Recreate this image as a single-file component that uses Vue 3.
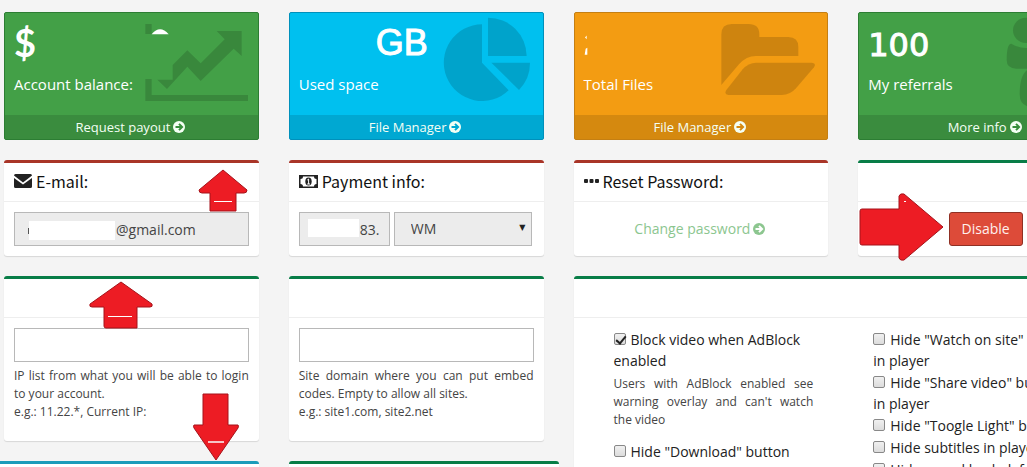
<script setup>
import { ref } from 'vue'

const email = ref('@gmail.com')
const wallet = ref('83.')
const method = ref('WM')
const ips = ref('')
const domains = ref('')

const stats = ref([
  { kind: 'chart', tone: 'green', value: '$', label: 'Account balance:', link: 'Request payout', box: '416 36 330 300' },
  { kind: 'pie', tone: 'aqua', value: 'GB', label: 'Used space', link: 'File Manager', box: '430 36 330 300' },
  { kind: 'folder', tone: 'orange', value: '', label: 'Total Files', link: 'File Manager', box: '428 36 330 300' },
  { kind: 'users', tone: 'green', value: '100', label: 'My referrals', link: 'More info', box: '427 36 330 300' },
])

const leftOptions = ref([
  { id: 'adblock', text: 'Block video when AdBlock enabled', on: true, help: "Users with AdBlock enabled see warning overlay and can't watch the video" },
  { id: 'download', text: 'Hide "Download" button', on: false },
])
const rightOptions = ref([
  { id: 'watch', text: 'Hide "Watch on site" button in player', on: false },
  { id: 'share', text: 'Hide "Share video" button in player', on: false },
  { id: 'light', text: 'Hide "Toogle Light" button', on: false },
  { id: 'subs', text: 'Hide subtitles in player', on: false },
  { id: 'sound', text: 'Hide sound back default', on: false },
])
</script>

<template>
  <main class="page">
    <div class="grid">
      <section v-for="s in stats" :key="s.kind" class="stat" :class="s.tone">
        <svg class="art" :viewBox="s.box" aria-hidden="true">
          <g v-if="s.kind === 'chart'">
            <path d="M438 69h19v30h-19zM438 234h19v48h289v18H438z" />
            <path d="M652 90h75v75l-24-22-99 97-40-43-61 67-29-28h46v-44l44-44 40 39 72-72z" />
            <path class="white" d="M457 100Q482 70 508 100z" />
          </g>
          <g v-else-if="s.kind === 'pie'">
            <path d="M607 70A115 115 0 1 0 687 268L607 185z" />
            <path d="M625 50A116 116 0 0 1 741 165H625z" />
            <path d="M635 185H751A116 116 0 0 1 718 267z" />
          </g>
          <g v-else-if="s.kind === 'folder'">
            <path d="M471 252V100Q471 69 502 69H553Q585 69 585 100V108H672Q702 108 702 138V165H575Q546 165 524 190z" />
            <path d="M575 185H743Q757 187 749 199L695 262Q677 282 653 282H492Q478 280 486 267L535 205Q552 185 575 185z" />
          </g>
          <g v-else>
            <circle cx="528" cy="88" r="38" />
            <path d="M485 128Q505 141 530 141Q543 141 553 136Q553 180 580 203H500Q471 203 471 177Q471 128 485 128z" />
            <circle cx="614" cy="145" r="57" />
            <path d="M552 202Q585 226 614 226T676 202Q718 202 718 280Q718 318 678 318H550Q510 318 510 280Q510 202 552 202z" />
            <circle cx="700" cy="88" r="38" />
            <path d="M743 128Q723 141 698 141Q685 141 675 136Q675 180 648 203H728Q757 203 757 177Q757 128 743 128z" />
          </g>
        </svg>
        <div class="inner">
          <h3 :class="'v-' + s.kind">
            {{ s.value }}
            <svg v-if="s.kind === 'folder'" class="sliver" viewBox="0 0 12 68" aria-hidden="true">
              <path d="M3 10l5-6v11zM2 62l3-18 5-3v21z" />
            </svg>
          </h3>
          <p>{{ s.label }}</p>
        </div>
        <a href="#" class="more">{{ s.link }}
          <svg class="go" viewBox="0 0 12 12" aria-hidden="true"><circle cx="6" cy="6" r="6" /><path d="M2.5 6h6M6 2.9L9.1 6 6 9.1" /></svg>
        </a>
      </section>

      <section class="box red">
        <header>
          <svg class="mail" viewBox="0 0 18 14" aria-hidden="true"><path d="M0 1.500Q0 0 1.500 0h15Q18 0 18 1.500L9 8.500zM0 4l9 6.500L18 4v8.500Q18 14 16.500 14h-15Q0 14 0 12.500z" /></svg>
          <label for="email">E-mail:</label>
        </header>
        <div class="body">
          <div class="masked">
            <input id="email" v-model="email" class="field grey email" readonly />
            <span class="mask wide"></span>
          </div>
        </div>
        <svg class="arrow a1" viewBox="0 0 50 44" aria-hidden="true"><path d="M25 1L49 21Q49 24 46 24H38V42H12V24H4Q1 24 1 21z" /><path class="dash" d="M16 32.500h18" /></svg>
      </section>

      <section class="box red">
        <header>
          <svg class="cash" viewBox="0 0 19 13" aria-hidden="true"><path fill-rule="evenodd" d="M0 0h19v13H0zM4 1.500Q4 4 1.500 4v5Q4 9 4 11.500h11Q15 9 17.500 9V4Q15 4 15 1.500z" /><ellipse cx="9.500" cy="6.500" rx="3.200" ry="4" /><path class="one" d="M8.300 5l1.300-1v5M8.200 9h2.800" /></svg>
          <label for="wallet">Payment info:</label>
        </header>
        <div class="body pay">
          <div class="masked">
            <input id="wallet" v-model="wallet" class="field grey wallet" readonly />
            <span class="mask short"></span>
          </div>
          <div class="picker">
            <select v-model="method" class="field grey" aria-label="Payment method"><option>WM</option></select>
            <span class="caret">▼</span>
          </div>
        </div>
      </section>

      <section class="box red">
        <header>
          <svg class="dots" viewBox="0 0 15 4" aria-hidden="true"><rect width="4" height="4" rx="1" /><rect x="5.500" width="4" height="4" rx="1" /><rect x="11" width="4" height="4" rx="1" /></svg>
          <span>Reset Password:</span>
        </header>
        <div class="body center">
          <a href="#" class="change">Change password
            <svg class="go" viewBox="0 0 12 12" aria-hidden="true"><circle cx="6" cy="6" r="6" /><path d="M2.500 6h6M6 2.900L9.100 6 6 9.100" /></svg>
          </a>
        </div>
      </section>

      <section class="box green">
        <header></header>
        <div class="body center"><button type="button" class="disable">Disable</button></div>
        <svg class="arrow a4" viewBox="0 0 86 68" aria-hidden="true"><path d="M3 16H40V3Q41 0 45 1L84 34 45 67Q41 68 40 65V52H3Q1 52 1 50V18Q1 16 3 16z" /><path class="dash" d="M45 8.500h2" /></svg>
      </section>

      <section class="box green">
        <header></header>
        <div class="body tall">
          <input id="ips" v-model="ips" class="field" />
          <label for="ips" class="help">IP list from what you will be able to login to your account.<br />e.g.: 11.22.*, Current IP:</label>
        </div>
        <svg class="arrow a2" viewBox="0 0 64 48" aria-hidden="true"><path d="M32 1L63 23Q64 26 61 26H48V47H17Q15 47 15 45V26H3Q0 26 1 23z" /><path class="dash" d="M19 35.500h24" /></svg>
        <svg class="arrow a3" viewBox="0 0 48 68" aria-hidden="true"><path d="M11 1H36V32H46Q47 33 46 35L24 67 2 35Q1 33 2 32H11z" /><path class="dash thick" d="M16 49h16" /></svg>
      </section>

      <section class="box green">
        <header></header>
        <div class="body tall">
          <input id="domains" v-model="domains" class="field" />
          <label for="domains" class="help">Site domain where you can put embed codes. Empty to allow all sites.<br />e.g.: site1.com, site2.net</label>
        </div>
      </section>

      <section class="box green player">
        <header></header>
        <div class="options">
          <div v-for="(list, i) in [leftOptions, rightOptions]" :key="i" class="list">
            <div v-for="o in list" :key="o.id" class="option">
              <label :for="o.id"><input :id="o.id" v-model="o.on" type="checkbox" />{{ o.text }}</label>
              <p v-if="o.help" class="help">{{ o.help }}</p>
            </div>
          </div>
        </div>
      </section>

      <div class="lower">
        <section class="box cyan"><header></header></section>
        <section class="box green"><header></header></section>
      </div>
    </div>
  </main>
</template>

<style>
html, body { background: #f4f4f4; overflow: hidden; }
</style>

<style scoped>
* { box-sizing: border-box; }
.page { padding: 12px 0 0 4px; font: 14px/20px "Open Sans", sans-serif; color: #333; }
.grid { display: grid; grid-template-columns: repeat(4, minmax(0, 1fr)); grid-template-rows: auto auto auto 1fr; gap: 20px 30px; margin-right: -86px; align-items: start; }
h3, p { margin: 0; }
.stat { position: relative; border: 1px solid; border-radius: 2px; color: #fff; overflow: hidden; }
.stat.green { background: #43a047; border-color: #2c7d33; }
.stat.aqua { background: #00c0ef; border-color: #0090bb; }
.stat.orange { background: #f39c12; border-color: #c47f13; }
.inner { height: 102px; padding: 9px; position: relative; }
.inner h3 { height: 40px; font: 700 38px/40px Lato, sans-serif; white-space: nowrap; }
.inner h3.v-pie { font: 400 36px/42px "Liberation Sans", sans-serif; padding-left: 77px; -webkit-text-stroke: 1px #fff; }
.inner h3.v-users { font: 400 32px/46px "DejaVu Sans", sans-serif; -webkit-text-stroke: 1px #fff; }
.inner h3.v-folder { padding-top: 12px; }
.inner p { margin-top: 12px; font-size: 15px; line-height: 20px; }
.sliver { width: 4px; height: 23px; display: block; fill: #fff; }
.art { position: absolute; top: 0; right: 10px; width: 110px; height: 100px; fill: rgba(0, 0, 0, .15); }
.art .white { fill: #fff; }
.more { display: flex; align-items: center; justify-content: center; gap: 3px; height: 24px; padding-right: 2px; background: rgba(0, 0, 0, .12); color: #f4fff4; text-decoration: none; font-size: 13px; position: relative; }
.go { width: 12px; height: 12px; fill: currentColor; flex: none; }
.go path { fill: none; stroke: #388e3c; stroke-width: 2; }
.aqua .go path { stroke: #00a9d2; }
.orange .go path { stroke: #d68910; }
.box { position: relative; background: #fff; border-top: 3px solid; border-radius: 3px; box-shadow: 0 1px 1px rgba(0, 0, 0, .12); }
.box.red { border-top-color: #a93528; }
.box.green { border-top-color: #087d47; }
.box.cyan { border-top-color: #1b9cba; }
.box header { height: 39px; padding: 0 10px 2px; border-bottom: 1px solid #eee; display: flex; align-items: center; gap: 4px; font: 16px/20px "Noto Sans CJK SC", sans-serif; color: #111; }
.box header svg { fill: #222; flex: none; }
.mail { width: 18px; height: 14px; }
.cash { width: 19px; height: 13px; }
.cash .one { fill: none; stroke: #fff; stroke-width: 1; }
.dots { width: 15px; height: 4px; }
.body { padding: 10px; min-height: 54px; }
.body.tall { min-height: 123px; }
.body.center { display: flex; align-items: center; justify-content: center; }
.field { display: block; width: 100%; height: 34px; padding: 0 12px; border: 1px solid #b8b8b8; border-radius: 0; background: #fff; font: 14px/20px "Open Sans", sans-serif; color: #444; outline: 0; appearance: none; }
.field.grey { background: #ececec; }
.masked, .picker { position: relative; }
.field.email { padding-left: 101px; }
.mask { position: absolute; background: #fff; }
.mask.wide { left: 15px; top: 9px; width: 86px; height: 19px; }
.mask.wide::before { content: ""; position: absolute; left: -1px; top: 7px; width: 1px; height: 6px; background: #555; }
.mask.short { left: 9px; top: 7px; width: 51px; height: 18px; }
.pay { display: grid; grid-template-columns: 91px 1fr; gap: 4px; padding-right: 12px; }
.field.wallet { padding: 0 0 0 60px; }
.picker .field { padding-left: 16px; }
.caret { position: absolute; right: 6px; top: 6px; font: 8px/20px "DejaVu Sans", sans-serif; color: #222; pointer-events: none; }
.change { display: flex; align-items: center; gap: 3px; padding-right: 2px; color: #8cc68f; text-decoration: none; }
.change .go path { stroke: #fff; }
.disable { height: 34px; padding: 0 12px; border: 1px solid #8f3024; border-radius: 3px; background: #dd4b39; color: #fff0ee; font: 14px/20px "Open Sans", sans-serif; }
.help { display: block; font-size: 12px; line-height: 18px; text-align: justify; color: #444; }
.tall .help { margin-top: 5px; }
.player { grid-column: 3 / 5; grid-row: 3 / 5; min-height: 260px; }
.options { display: grid; grid-template-columns: 1fr 1fr; padding: 11px 10px; }
.list { padding: 0 30px; }
.option { margin-bottom: 1px; line-height: 21px; color: #222; }
.option label { display: block; }
.option .help { margin: 4px 0 12px; }
.option input { appearance: none; width: 12px; height: 12px; margin: 0 5px 0 0; border: 1px solid #888; border-radius: 2px; background: linear-gradient(#f0f0f0, #dcdcdc); position: relative; vertical-align: 0; }
.option input:checked::after { content: ""; position: absolute; left: 3px; top: 0; width: 4px; height: 8px; border: solid #222; border-width: 0 2px 2px 0; transform: rotate(40deg); }
.lower { grid-column: 1 / 3; display: grid; grid-template-columns: 1fr 1fr; gap: 30px; margin: 0 -15px; }
.arrow { position: absolute; z-index: 2; fill: #ed1c24; stroke: #a5131a; stroke-width: 1; }
.arrow .dash { stroke: #fff; fill: none; }
.arrow .thick { stroke: #f6c4c6; stroke-width: 2; }
.a1 { left: 194px; top: 6px; width: 50px; height: 44px; }
.a2 { left: 85px; top: 2px; width: 64px; height: 48px; }
.a3 { left: 188px; top: 114px; width: 48px; height: 68px; }
.a4 { left: 1px; top: 30px; width: 86px; height: 68px; }
</style>
